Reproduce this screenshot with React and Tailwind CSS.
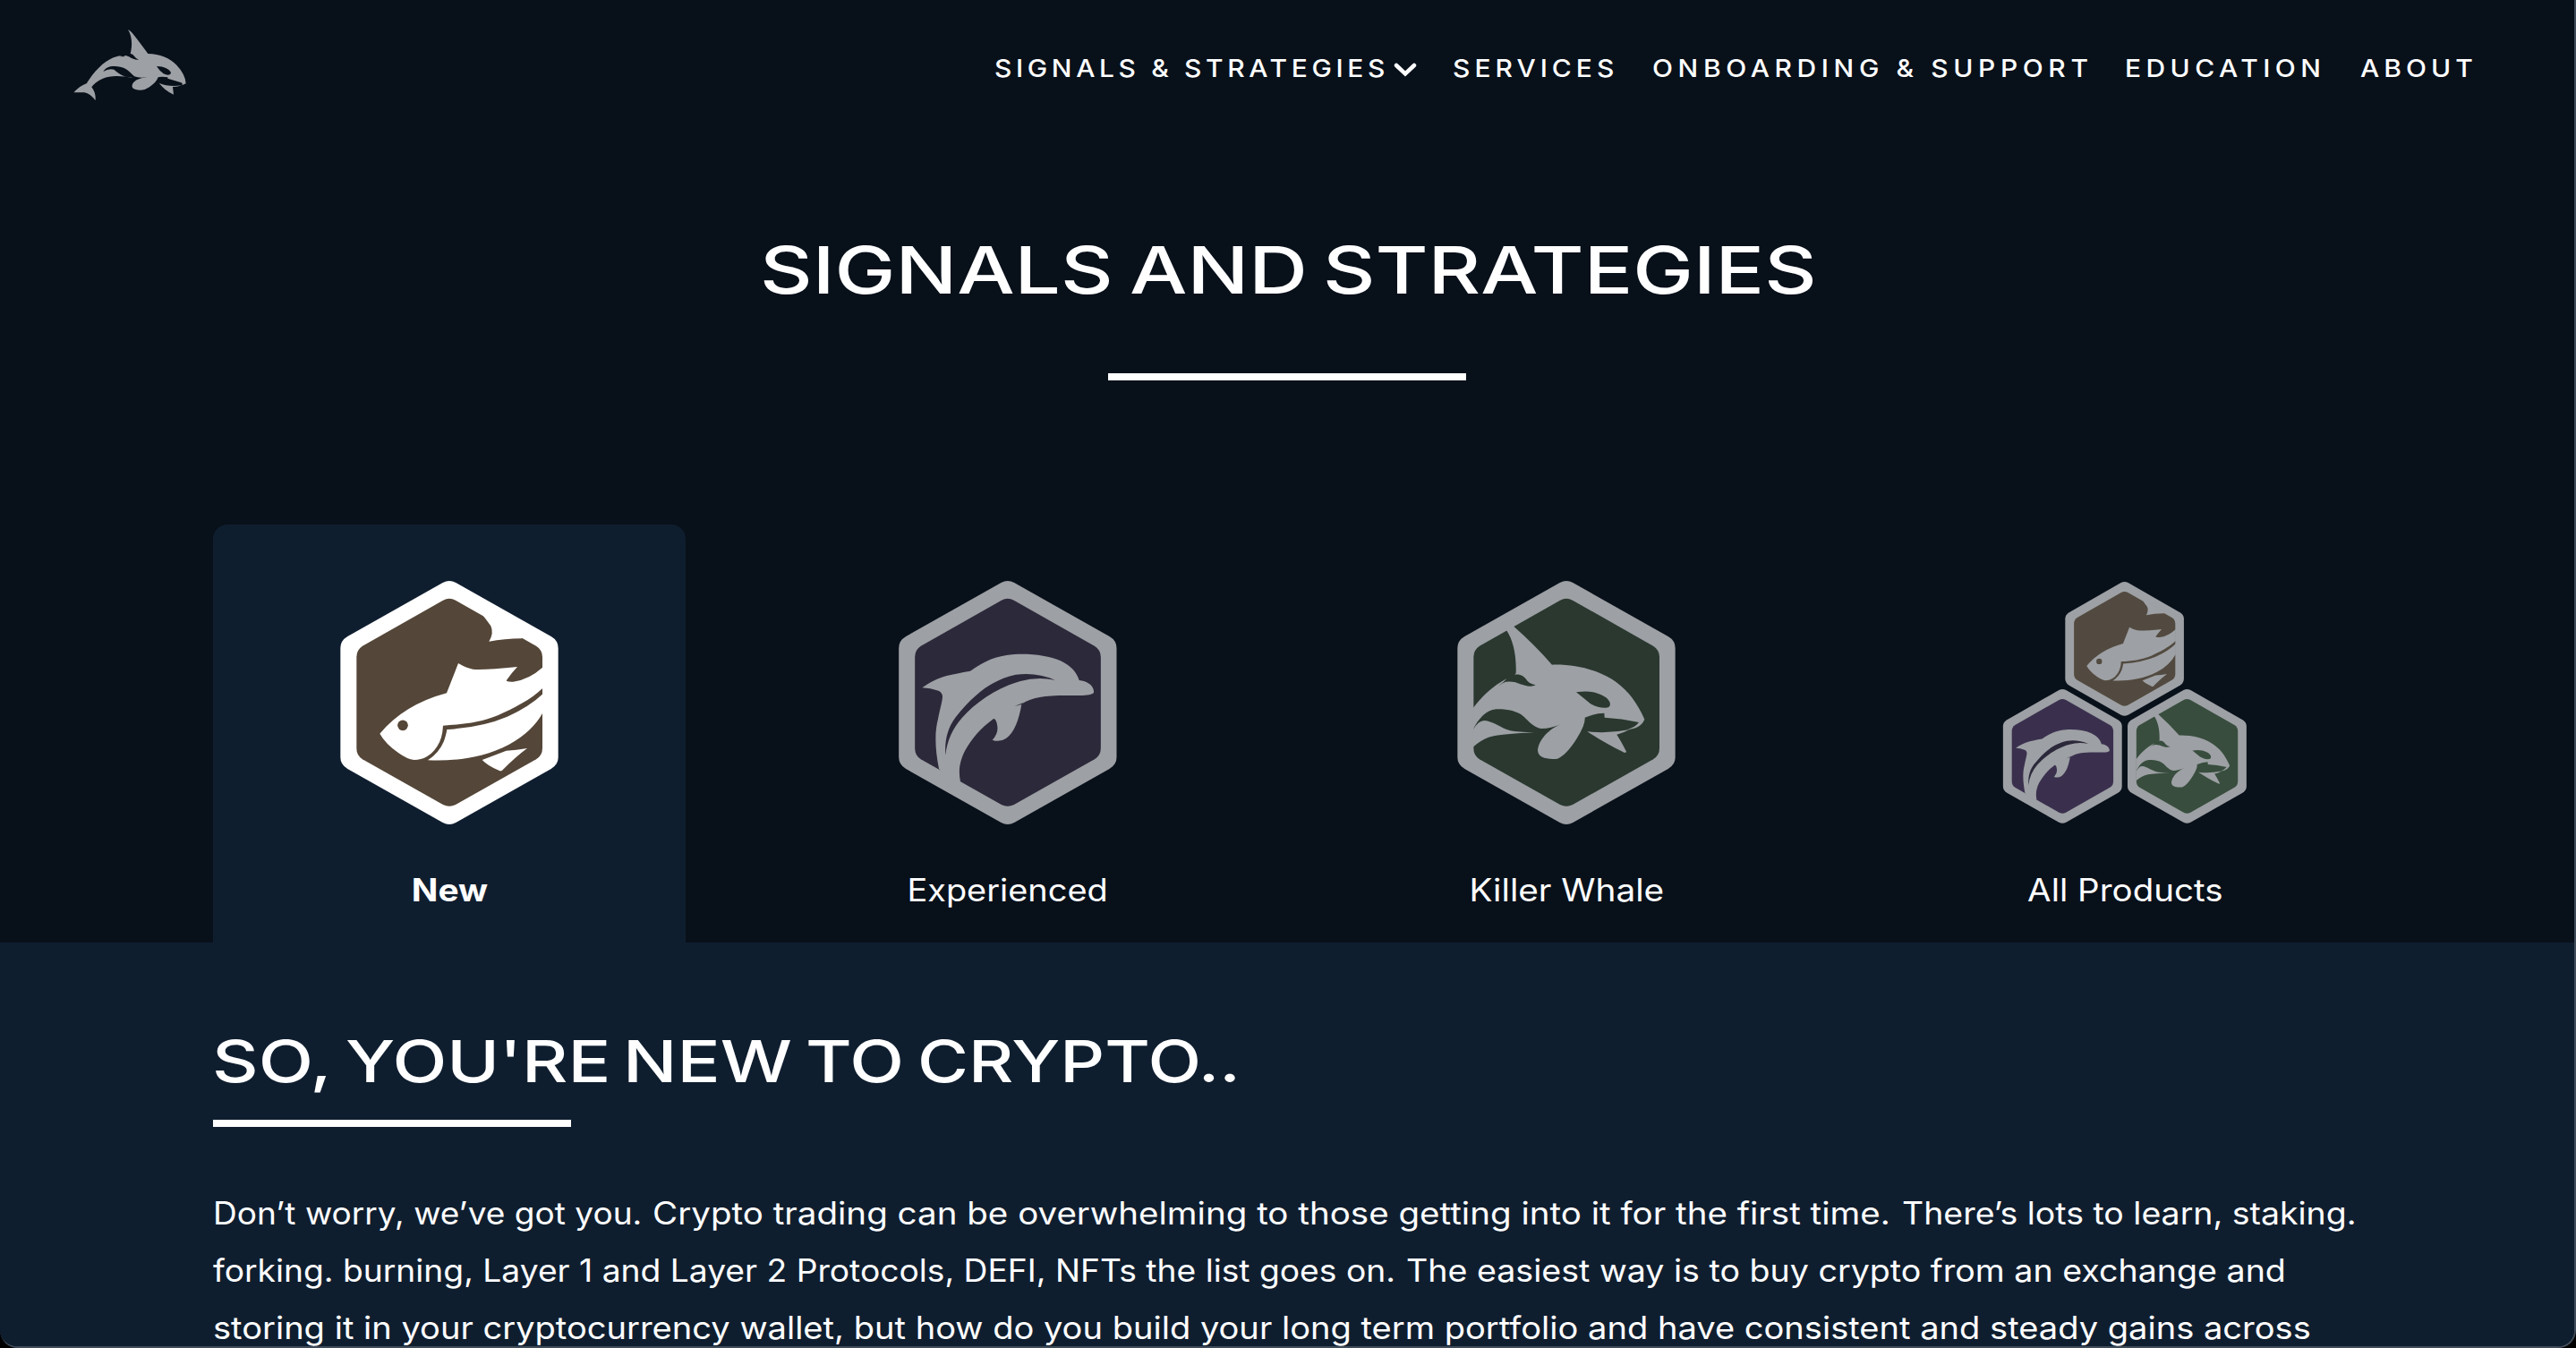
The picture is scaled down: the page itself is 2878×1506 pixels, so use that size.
import React from "react";

const OUTER =
  "M404 63 Q426 51 448 63 L767 243 Q791 257 791 282 V648 Q791 673 767 687 L448 867 Q426 879 404 867 L85 687 Q61 673 61 648 V282 Q61 257 85 243Z";
const INNER =
  "M405 122 Q426 111 447 122 L717 275 Q738 288 738 312 V618 Q738 642 717 655 L447 807 Q426 818 405 807 L135 655 Q115 642 115 618 V312 Q115 288 135 275Z";

function Hexagon({ line, fill, shift = 0 }) {
  return (
    <g transform={`translate(${shift} 0)`}>
      <path d={OUTER} fill={line} />
      <path d={INNER} fill={fill} />
    </g>
  );
}

function Fish({ line, fill }) {
  return (
    <g>
      <Hexagon line={line} fill={fill} />
      <g fill={line}>
        <path d="M540 175 Q546 182 565 208 Q576 232 559 260 Q610 250 669 249.500 L676 244 L544 166Z" />
        <path d="M193 569 Q275 471 417 433 L456 333 Q485 350 505 353 Q545 356 654 345 Q634 366 617 391 Q618 396 640 395 Q692 389 741 345 V415 C700 455 640 485 590 507 C530 532 470 538 405 542 Q403 585 385 612 Q355 657 308 657 Q285 655 255 633 Q212 603 193 569Z" />
        <path d="M418 555 Q535 548 620 512 Q695 478 741 434 V496 Q705 563 625 606 C540 651 440 662 354 658 Q392 633 408 594 Q416 570 418 555Z" />
        <path d="M536 657 L617 626 Q650 625 687 618 Q650 645 603 692 Q598 696 592 692 Q556 678 536 657Z" />
      </g>
      <circle cx="270" cy="541" r="17.500" fill={fill} />
    </g>
  );
}

function Dolphin({ line, fill, stripe = fill }) {
  return (
    <g>
      <Hexagon line={line} fill={fill} shift={11.5} />
      <path
        fill={line}
        d="M151 415 C200 378 240 372 312 359 C360 325 400 307 460 303 C520 300 575 308 615 325 C650 342 668 362 677 390 C705 393 728 408 726 432 C712 442 690 441 650 441 C570 440 520 445 484 470 C476 520 460 565 432 585 Q410 599 386 590 Q406 570 403 545 Q400 519 390 519 C345 552 318 585 295 625 C275 665 272 695 279 729 L240 725 L207 687 C194 620 192 565 204 520 C212 480 218 462 219 445 Q217 427 200 424 Q180 417 151 415Z"
      />
      <path
        fill={stripe}
        d="M229 641 C226 590 236 550 262 515 C330 430 390 387 465 371 Q535 362 596 389 Q535 378 480 393 C400 415 330 465 285 515 Q236 570 229 641Z"
      />
      <path fill={fill} d="M461 477 L492 464 L484 471Z" />
    </g>
  );
}

function Orca({ line, fill }) {
  return (
    <g>
      <Hexagon line={line} fill={fill} shift={24} />
      <g fill={line}>
        <path d="M251 225 L240 215 L265 202 L275 211 Q340 268 402 338 C480 336 550 355 600 385 C650 415 685 460 712 521 C702 544 682 553 655 555 Q680 548 693 531 Q635 518 578 515 L577 500 Q548 500 512 515 Q514 540 485 585 C460 625 440 645 420 653 C385 656 355 650 354 625 C357 590 390 552 440 533 Q400 552 365 552 C340 548 325 528 305 510 C285 493 250 486 215 487 C180 490 155 520 137 555 V484 C170 440 205 408 250 385 L238 398 Q255 391 280 397 C315 412 335 413 347 406 Q333 405 320 393 C307 375 297 369 277 371 L281 366 C283 300 270 255 251 225Z" />
        <path d="M137 556 Q155 525 175 525 C205 527 230 550 262 559 Q285 564 342 565 Q245 570 210 576 C185 580 160 594 137 614Z" />
        <path d="M520 562 Q590 570 662 555 Q640 567 619 572 Q634 595 651 629 Q649 636 638 629 C600 612 560 588 520 562Z" />
      </g>
      <g fill={fill}>
        <path d="M483 430 C520 424 545 428 570 440 C595 452 602 470 593 479 C580 487 550 480 530 468 Q508 450 483 430Z" />
        <path d="M222 409 L250 388 L243 396Z" />
      </g>
    </g>
  );
}

const GREY = "#9da0a4";

const FishBadge = () => (
  <svg className="h-[310px] w-[290px]" viewBox="-9 0 870 930">
    <Fish line="#ffffff" fill="#544638" />
  </svg>
);
const DolphinBadge = () => (
  <svg className="h-[310px] w-[290px]" viewBox="3 0 870 930">
    <Dolphin line={GREY} fill="#2c293b" />
  </svg>
);
const OrcaBadge = () => (
  <svg className="h-[310px] w-[290px]" viewBox="15 0 870 930">
    <Orca line={GREY} fill="#2a3830" />
  </svg>
);
const AllBadge = () => (
  <svg className="h-[310px] w-[310px]" viewBox="-3 0 930 930">
    <g transform="translate(228.700 28.600) scale(.545 .551)">
      <Fish line={GREY} fill="#524a40" />
    </g>
    <g transform="translate(14 388.600) scale(.546 .551)">
      <Dolphin line={GREY} fill="#3a304e" stripe="#2c293b" />
    </g>
    <g transform="translate(424.600 388.600) scale(.546 .551)">
      <Orca line={GREY} fill="#384d3e" />
    </g>
  </svg>
);

function Logo() {
  return (
    <svg className="h-[120px] w-[180px]" viewBox="0 0 540 360">
      <path
        fill={GREY}
        d="M249 69 Q256 72 263 80 Q285 107 316 150 C355 150 390 165 412 188 Q442 220 443 250 L430 256 Q434 250 427 247 L382 233 V229 Q360 226 350 229 C345 245 325 262 305 270 C290 274 272 272 264 264 C260 255 266 245 278 238 Q292 231 314 229 Q285 233 270 226 C258 215 252 206 240 200 C225 192 205 190 190 193 C178 196 170 203 166 210 Q185 198 202 203 C222 220 235 228 268 231 C225 223 190 222 165 233 C145 242 133 252 127 262 Q142 280 140 307 Q122 283 103 280 L67 280 Q90 256 110 250 C135 210 165 178 200 163 Q235 150 252 160 Q270 172 285 170 Q275 166 270 158 Q265 151 257 150 C265 120 262 90 249 69Z"
      />
      <path fill="#08101a" d="M345 192 C370 193 385 200 393 213 C392 223 380 223 368 217 Q355 208 345 192Z" />
      <path fill={GREY} d="M353 248 Q385 262 428 256 Q415 262 399 261 L402 287 C380 277 365 264 353 248Z" />
      <path fill="#08101a" d="M220 159 L238 154 L236 160Z" />
    </svg>
  );
}

const nav = [
  { text: "SIGNALS & STRATEGIES", box: "w-[512px]", spacing: "tracking-[4.25px]", menu: true },
  { text: "SERVICES", box: "w-[223px]", spacing: "tracking-[4.6px]" },
  { text: "ONBOARDING & SUPPORT", box: "w-[528px]", spacing: "tracking-[5.15px]" },
  { text: "EDUCATION", box: "w-[263px]", spacing: "tracking-[5px]" },
  { text: "ABOUT", box: "w-[130px]", spacing: "tracking-[4.6px]" },
];

const title = [
  { text: "SIGNALS", box: "w-[413px]", stretch: "scale-x-[1.245]" },
  { text: "AND", box: "w-[216px]", stretch: "scale-x-[1.245]" },
  { text: "STRATEGIES", box: "w-[546px]", stretch: "scale-x-[1.24]" },
];

const subtitle = [
  { text: "SO,", box: "w-[149px]", stretch: "scale-x-[1.23]" },
  { text: "YOU'RE", box: "w-[310px]", stretch: "scale-x-[1.222]" },
  { text: "NEW", box: "w-[204px]", stretch: "scale-x-[1.23]" },
  { text: "TO", box: "w-[125px]", stretch: "scale-x-[1.22]" },
  { text: "CRYPTO..", box: "w-[360px]", stretch: "scale-x-[1.195]" },
];

const tabs = [
  { label: "New", Badge: FishBadge, stretch: "scale-x-[1.11] font-bold", active: true },
  { label: "Experienced", Badge: DolphinBadge, stretch: "scale-x-[1.083]" },
  { label: "Killer Whale", Badge: OrcaBadge, stretch: "scale-x-[1.107]" },
  { label: "All Products", Badge: AllBadge, stretch: "scale-x-[1.1]" },
];

const intro = [
  [
    { text: "Don’t worry, we’ve got you.", box: "w-[491px]", stretch: "scale-x-[1.059]" },
    {
      text: "Crypto trading can be overwhelming to those getting into it for the first time.",
      box: "w-[1396px]",
      stretch: "scale-x-[1.101]",
    },
    { text: "There’s lots to learn, staking.", box: "w-[520px]", stretch: "scale-x-[1.07]" },
  ],
  [
    {
      text: "forking. burning, Layer 1 and Layer 2 Protocols, DEFI, NFTs the list goes on.",
      box: "w-[1333px]",
      stretch: "scale-x-[1.063]",
    },
    {
      text: "The easiest way is to buy crypto from an exchange and",
      box: "w-[1000px]",
      stretch: "scale-x-[1.074]",
    },
  ],
  [
    {
      text: "storing it in your cryptocurrency wallet, but how do you build your long term portfolio and have consistent and steady gains across",
      box: "w-[2400px]",
      stretch: "scale-x-[1.0875]",
    },
  ],
];

function Words({ items }) {
  return items.map((w) => (
    <span key={w.text} className={`shrink-0 ${w.box}`}>
      <span className={`block w-max origin-left ${w.stretch}`}>{w.text}</span>
    </span>
  ));
}

export default function App() {
  return (
    <div className="h-[1506px] w-[2878px] overflow-hidden bg-black">
      <div className="flex h-full flex-col overflow-hidden rounded-b-[20px] border-r-2 border-b-2 border-[#414d5b] bg-[#08101a] font-['Inter',sans-serif] text-white">
        <header className="flex h-[258px] shrink-0 items-start justify-between pl-[60px]">
          <div className="pt-[10px]">
            <Logo />
          </div>
          <nav className="mr-[109px] flex pt-[56px] text-[27.5px] leading-[40px] font-[450]">
            {nav.map((n) => (
              <a key={n.text} className={`flex ${n.box}`}>
                <span className={n.menu ? "w-[446px]" : ""}>
                  <span className={`block w-max origin-left scale-x-[1.09] ${n.spacing}`}>{n.text}</span>
                </span>
                {n.menu && (
                  <svg className="mt-[12px] h-[20px] w-[26px]" viewBox="0 0 26 20">
                    <path d="M3 5 L13 14.500 L23 5" fill="none" stroke="#fff" strokeWidth="4.500" strokeLinecap="round" />
                  </svg>
                )}
              </a>
            ))}
          </nav>
        </header>

        <h1 className="ml-[849px] flex h-[88px] shrink-0 text-[73px] leading-[88px] font-[450]">
          <Words items={title} />
        </h1>
        <div className="mt-[71px] ml-[1238px] h-2 w-[400px] shrink-0 bg-white" />

        <div className="mt-[161px] ml-[238px] flex h-[467px] w-[2400px] shrink-0 gap-24">
          {tabs.map(({ label, Badge, stretch, active }) => (
            <div
              key={label}
              className={`flex w-[528px] flex-col items-center rounded-t-2xl pt-[44px] ${active ? "bg-[#0f1e2f]" : ""}`}
            >
              <Badge />
              <span className={`mt-8 text-[35px] leading-[44px] ${stretch}`}>{label}</span>
            </div>
          ))}
        </div>

        <section className="flex-1 bg-[#0f1e2f] pt-[93px] pl-[238px]">
          <h2 className="-ml-px flex h-20 text-[65px] leading-[80px] font-[450]">
            <Words items={subtitle} />
          </h2>
          <div className="mt-[25px] h-2 w-[400px] bg-white" />
          <div className="mt-16 text-[35px] leading-[64px] whitespace-nowrap">
            {intro.map((line) => (
              <p key={line[0].text} className="flex">
                <Words items={line} />
              </p>
            ))}
          </div>
        </section>
      </div>
    </div>
  );
}
